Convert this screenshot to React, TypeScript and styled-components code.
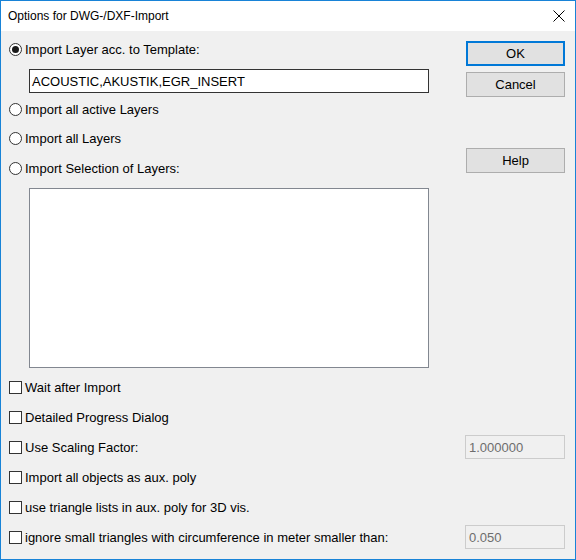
import React from "react";
import styled, { createGlobalStyle } from "styled-components";

const BORDER_BLUE = "#1883d7";
const FACE = "#f0f0f0";
const FONT = `"Liberation Sans", Arial, sans-serif`;

const Global = createGlobalStyle`
  html, body { margin: 0; padding: 0; background: ${FACE}; }
  * { box-sizing: border-box; }
`;

const Window = styled.div`
  width: 576px;
  height: 560px;
  border: 1px solid ${BORDER_BLUE};
  background: ${FACE};
  display: flex;
  flex-direction: column;
  font-family: ${FONT};
  font-size: 13px;
  color: #000;
`;

const TitleBar = styled.div`
  height: 30px;
  background: #fff;
  display: flex;
  align-items: center;
  justify-content: space-between;
  padding: 0 8px 0 7px;
  font-size: 12px;
  flex-shrink: 0;
`;

const CloseButton = styled.div`
  width: 16px;
  height: 16px;
  display: flex;
  align-items: center;
  justify-content: center;
`;

const Body = styled.div`
  flex: 1;
  padding: 3px 10px 0 7px;
  display: flex;
  flex-direction: column;
`;

const TopSection = styled.div`
  display: flex;
  justify-content: space-between;
`;

const LeftColumn = styled.div`
  width: 421px;
  display: flex;
  flex-direction: column;
`;

const RightColumn = styled.div`
  width: 99px;
  display: flex;
  flex-direction: column;
  padding-top: 7px;
`;

const OptionRow = styled.label<{ $top?: number }>`
  height: 26px;
  margin-top: ${(p) => p.$top ?? 0}px;
  display: flex;
  align-items: center;
  gap: 3px;
  white-space: nowrap;
`;

const RadioCircle = styled.span<{ $checked?: boolean }>`
  width: 13px;
  height: 13px;
  margin-left: 1px;
  border-radius: 50%;
  border: 1px solid #333;
  background: #fff;
  display: flex;
  align-items: center;
  justify-content: center;
  flex-shrink: 0;

  &::after {
    content: "";
    width: 7px;
    height: 7px;
    border-radius: 50%;
    background: ${(p) => (p.$checked ? "#1a1a1a" : "transparent")};
  }
`;

const CheckBox = styled.span`
  width: 13px;
  height: 13px;
  margin-left: 1px;
  border: 1px solid #333;
  background: #fff;
  flex-shrink: 0;
`;

const TemplateInput = styled.div`
  margin: 7px 0 0 21px;
  width: 400px;
  height: 24px;
  border: 1px solid #333;
  background: #fff;
  display: flex;
  align-items: center;
  padding-left: 2px;
`;

const LayerList = styled.div`
  margin: 7px 0 0 21px;
  width: 400px;
  height: 180px;
  border: 1px solid #828790;
  background: #fff;
`;

const Button = styled.div<{ $default?: boolean; $top?: number }>`
  height: 25px;
  margin-top: ${(p) => p.$top ?? 0}px;
  background: #e1e1e1;
  border: ${(p) => (p.$default ? "2px solid #0078d7" : "1px solid #adadad")};
  display: flex;
  align-items: center;
  justify-content: center;
`;

const CheckList = styled.div`
  margin-top: 4px;
  display: flex;
  flex-direction: column;
`;

const CheckRow = styled.div`
  height: 30px;
  display: flex;
  align-items: center;
  justify-content: space-between;
`;

const CheckLabel = styled.label`
  display: flex;
  align-items: center;
  gap: 3px;
  white-space: nowrap;
`;

const ValueField = styled.div`
  width: 100px;
  height: 24px;
  border: 1px solid #cccccc;
  background: ${FACE};
  color: #6d6d6d;
  display: flex;
  align-items: center;
  padding-left: 3px;
`;

const radios = [
  { label: "Import Layer acc. to Template:", checked: true },
  { label: "Import all active Layers" },
  { label: "Import all Layers" },
  { label: "Import Selection of Layers:" },
];

const checks: { label: string; value?: string }[] = [
  { label: "Wait after Import" },
  { label: "Detailed Progress Dialog" },
  { label: "Use Scaling Factor:", value: "1.000000" },
  { label: "Import all objects as aux. poly" },
  { label: "use triangle lists in aux. poly for 3D vis." },
  { label: "ignore small triangles with circumference in meter smaller than:", value: "0.050" },
];

export default function App() {
  return (
    <>
      <Global />
      <Window>
        <TitleBar>
          <span>Options for DWG-/DXF-Import</span>
          <CloseButton>
            <svg width="12" height="12" viewBox="0 0 12 12">
              <path d="M0.5 0.5 L11.5 11.5 M11.5 0.5 L0.5 11.5" stroke="#000" strokeWidth="1" />
            </svg>
          </CloseButton>
        </TitleBar>
        <Body>
          <TopSection>
            <LeftColumn>
              <OptionRow $top={2}>
                <RadioCircle $checked={radios[0].checked} />
                {radios[0].label}
              </OptionRow>
              <TemplateInput>ACOUSTIC,AKUSTIK,EGR_INSERT</TemplateInput>
              <OptionRow $top={3}>
                <RadioCircle />
                {radios[1].label}
              </OptionRow>
              <OptionRow $top={3}>
                <RadioCircle />
                {radios[2].label}
              </OptionRow>
              <OptionRow $top={4}>
                <RadioCircle />
                {radios[3].label}
              </OptionRow>
              <LayerList />
            </LeftColumn>
            <RightColumn>
              <Button $default>OK</Button>
              <Button $top={6}>Cancel</Button>
              <Button $top={51}>Help</Button>
            </RightColumn>
          </TopSection>
          <CheckList>
            {checks.map((c) => (
              <CheckRow key={c.label}>
                <CheckLabel>
                  <CheckBox />
                  {c.label}
                </CheckLabel>
                {c.value && <ValueField>{c.value}</ValueField>}
              </CheckRow>
            ))}
          </CheckList>
        </Body>
      </Window>
    </>
  );
}
